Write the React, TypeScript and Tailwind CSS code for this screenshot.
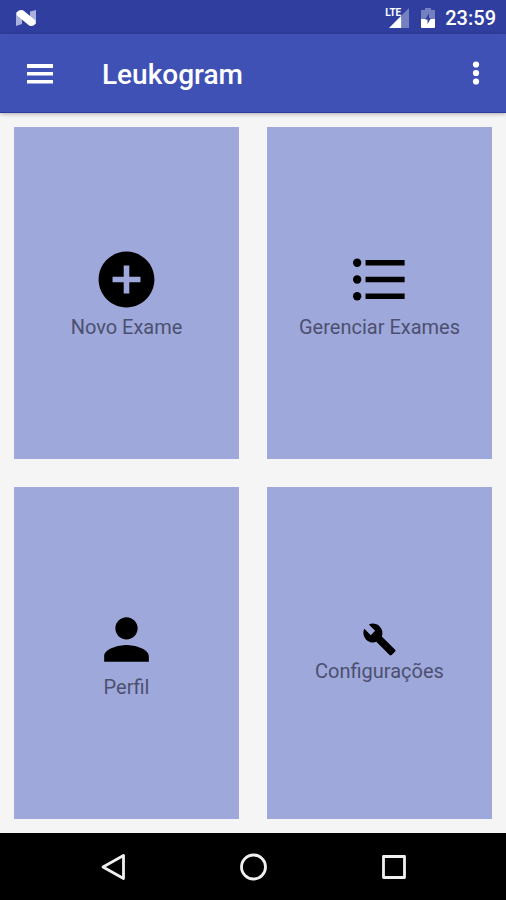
import type { ReactNode } from 'react';

type Tile = {
  label: string;
  icon: ReactNode;
};

const tiles: Tile[] = [
  {
    label: 'Novo Exame',
    icon: (
      <svg viewBox="0 0 24 24" className="size-[67px]" fill="currentColor" aria-hidden="true">
        <path d="M12 2C6.48 2 2 6.48 2 12s4.48 10 10 10 10-4.48 10-10S17.52 2 12 2zm5 11h-4v4h-2v-4H7v-2h4V7h2v4h4v2z" />
      </svg>
    ),
  },
  {
    label: 'Gerenciar Exames',
    icon: (
      <svg viewBox="0 0 24 24" className="size-[67px]" fill="currentColor" aria-hidden="true">
        <circle cx="4" cy="6" r="1.5" />
        <circle cx="4" cy="12" r="1.5" />
        <circle cx="4" cy="18" r="1.5" />
        <path d="M7 5h14v2H7zM7 11h14v2H7zM7 17h14v2H7z" />
      </svg>
    ),
  },
  {
    label: 'Perfil',
    icon: (
      <svg viewBox="0 0 24 24" className="size-[67px]" fill="currentColor" aria-hidden="true">
        <path d="M12 12c2.21 0 4-1.79 4-4s-1.79-4-4-4-4 1.79-4 4 1.79 4 4 4zm0 2c-2.67 0-8 1.34-8 4v2h16v-2c0-2.66-5.33-4-8-4z" />
      </svg>
    ),
  },
  {
    label: 'Configurações',
    icon: (
      <svg viewBox="0 0 24 24" className="size-[35px]" fill="currentColor" aria-hidden="true">
        <path d="M22.7 19l-9.1-9.1c.9-2.3.4-5-1.5-6.9-2-2-5-2.4-7.4-1.3L9 6 6 9 1.6 4.7C.4 7.1.9 10.1 2.9 12.1c1.9 1.9 4.6 2.4 6.9 1.5l9.1 9.1c.4.4 1 .4 1.4 0l2.3-2.3c.5-.4.5-1.1.1-1.4z" />
      </svg>
    ),
  },
];

function StatusBar() {
  return (
    <div className="flex h-[34px] items-center bg-[#303f9f] pt-px pr-[10px] pl-4 text-white">
      <svg viewBox="0 0 20 16" className="h-4 w-5" aria-hidden="true">
        <path d="M0 2.5L6 1v13L0 16zM14 1.500L20 0v14l-6 1.500z" fill="#a9b1dc" />
        <path d="M0.500 3Q2 0 5.500 0Q7 0 8 1L19.500 10.500V13.500Q18 16 15 16Q13.500 16 12.500 15L1 5.500z" fill="#fff" />
      </svg>
      <div className="ml-auto flex items-center">
        <span className="mb-[10px] text-[10px] leading-3 font-bold">LTE</span>
        <svg viewBox="0 0 20 20" className="-ml-3 size-5" aria-hidden="true">
          <path d="M20 0v20H14V6z" fill="#7480c0" />
          <path d="M12.500 7.500V20H0z" fill="#fff" />
          <path d="M12.500 7.500L14 6V20H12.500z" fill="#7480c0" />
        </svg>
        <svg viewBox="0 0 14 20" className="ml-3 h-5 w-[14px]" aria-hidden="true">
          <path d="M4 0h6v2h3q1 0 1 1v8H0V3q0-1 1-1h3z" fill="#7480c0" />
          <path d="M0 11h14v8q0 1-1 1H1q-1 0-1-1z" fill="#fff" />
          <path d="M8 5.500L4 11.500h2.500v4.500L10 10H8z" fill="#303f9f" />
        </svg>
        <span className="ml-[10px] text-xl font-medium">23:59</span>
      </div>
    </div>
  );
}

function AppBar() {
  return (
    <header className="relative flex h-[79px] items-center border-b border-[#2b3ba3] bg-[#3f51b5] pr-[13px] pl-[22px] text-white shadow-[0_1px_4px_rgba(0,0,0,0.3)]">
      <button type="button" aria-label="Menu">
        <svg viewBox="0 0 36 36" className="size-9" fill="currentColor" aria-hidden="true">
          <path d="M5 9h26v4H5zM5 17h26v3.500H5zM5 25h26v3.500H5z" />
        </svg>
      </button>
      <h1 className="ml-11 pt-1 text-[28px] leading-9 font-medium">Leukogram</h1>
      <button type="button" aria-label="Mais opções" className="ml-auto">
        <svg viewBox="0 0 24 24" className="size-[34px]" fill="currentColor" aria-hidden="true">
          <circle cx="12" cy="6" r="2.2" />
          <circle cx="12" cy="12" r="2.2" />
          <circle cx="12" cy="18" r="2.2" />
        </svg>
      </button>
    </header>
  );
}

function NavBar() {
  return (
    <nav className="flex h-[67px] items-center justify-center gap-28 bg-black text-[#f0f0f0]">
      <button type="button" aria-label="Voltar">
        <svg viewBox="0 0 28 28" className="size-7" fill="none" stroke="currentColor" strokeWidth="2.8" strokeLinejoin="round" aria-hidden="true">
          <path d="M24.500 2.500v23L4 14z" />
        </svg>
      </button>
      <button type="button" aria-label="Início">
        <svg viewBox="0 0 28 28" className="size-7" fill="none" stroke="currentColor" strokeWidth="2.8" aria-hidden="true">
          <circle cx="14.500" cy="14" r="12" />
        </svg>
      </button>
      <button type="button" aria-label="Recentes">
        <svg viewBox="0 0 28 28" className="size-7" fill="none" stroke="currentColor" strokeWidth="2.8" strokeLinejoin="round" aria-hidden="true">
          <path d="M4.500 3.500h21v21h-21z" />
        </svg>
      </button>
    </nav>
  );
}

export default function App() {
  return (
    <div className="flex min-h-screen flex-col bg-[#f5f5f5] font-[Roboto,sans-serif]">
      <StatusBar />
      <AppBar />
      <main className="grid flex-1 auto-rows-fr grid-cols-2 gap-7 p-[14px]">
        {tiles.map((tile) => (
          <button
            key={tile.label}
            type="button"
            className="flex flex-col items-center justify-center bg-[#9fa8da] text-black"
          >
            {tile.icon}
            <span className="text-xl leading-7 text-[#4c5070]">{tile.label}</span>
          </button>
        ))}
      </main>
      <NavBar />
    </div>
  );
}
